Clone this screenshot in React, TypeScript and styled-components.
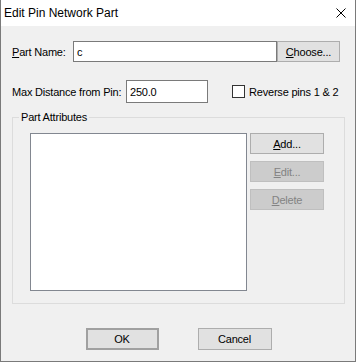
import styled, { createGlobalStyle } from 'styled-components';

const GlobalStyle = createGlobalStyle`
  html, body {
    margin: 0;
    padding: 0;
    background: #ffffff;
  }
  * {
    box-sizing: border-box;
  }
`;

function Mn({ children }: { children: string }) {
  return <Under>{children}</Under>;
}

function App() {
  return (
    <>
      <GlobalStyle />
      <Window>
        <TitleBar>
          <Title>Edit Pin Network Part</Title>
          <CloseBox>
            <svg width="10" height="10" viewBox="0 0 10 10">
              <path d="M0.5 0.5 L9.5 9.5 M9.5 0.5 L0.5 9.5" stroke="#000" strokeWidth="1" />
            </svg>
          </CloseBox>
        </TitleBar>
        <Body>
          <NameRow>
            <Label $width={61}>
              <Mn>P</Mn>art Name:
            </Label>
            <TextBox $width={204} $height={21} defaultValue="c" />
            <Button $width={63}>
              <Mn>C</Mn>hoose...
            </Button>
          </NameRow>
          <DistanceRow>
            <Label $width={114}>Max Distance from Pin:</Label>
            <TextBox $width={82} $height={23} defaultValue="250.0" />
            <CheckLabel>
              <CheckBox />
              Reverse pins 1 &amp; 2
            </CheckLabel>
          </DistanceRow>
          <Group>
            <Legend>Part Attributes</Legend>
            <GroupInner>
              <ListBox />
              <SideButtons>
                <Button $width={74}>
                  <Mn>A</Mn>dd...
                </Button>
                <Button $width={74} $disabled>
                  <Mn>E</Mn>dit...
                </Button>
                <Button $width={74} $disabled>
                  <Mn>D</Mn>elete
                </Button>
              </SideButtons>
            </GroupInner>
          </Group>
          <Footer>
            <Button $width={73} $height={22} $default>
              OK
            </Button>
            <Button $width={74} $height={22}>
              Cancel
            </Button>
          </Footer>
        </Body>
      </Window>
    </>
  );
}

const Window = styled.div`
  width: 356px;
  height: 362px;
  display: flex;
  flex-direction: column;
  border: 1px solid #7a7a7a;
  border-top: none;
  background: #f0f0f0;
  font-family: 'Liberation Sans', Arial, sans-serif;
  font-size: 11px;
  letter-spacing: -0.2px;
  color: #000;
`;

const TitleBar = styled.div`
  height: 26px;
  flex: none;
  display: flex;
  align-items: center;
  justify-content: space-between;
  background: #ffffff;
  padding: 0 9px 0 3px;
`;

const Title = styled.span`
  font-family: 'Liberation Sans', Arial, sans-serif;
  font-size: 12px;
  letter-spacing: 0;
  margin-top: -1px;
`;

const CloseBox = styled.span`
  display: flex;
  width: 10px;
  height: 10px;
  margin-bottom: 1px;
`;

const Body = styled.div`
  flex: 1;
  display: flex;
  flex-direction: column;
  padding: 15px 10px 0 11px;
`;

const Row = styled.div`
  display: flex;
  align-items: center;
`;

const NameRow = styled(Row)`
  height: 21px;
`;

const DistanceRow = styled(Row)`
  height: 23px;
  margin-top: 18px;
`;

const Label = styled.span<{ $width: number }>`
  width: ${({ $width }) => $width}px;
  flex: none;
  white-space: nowrap;
`;

const Under = styled.span`
  text-decoration: underline;
  text-underline-offset: 1px;
`;

const TextBox = styled.input<{ $width: number; $height: number }>`
  width: ${({ $width }) => $width}px;
  height: ${({ $height }) => $height}px;
  flex: none;
  border: 1px solid #7a7a7a;
  background: #ffffff;
  padding: 0 0 0 3px;
  margin: 0;
  font: inherit;
  letter-spacing: inherit;
  color: #000;
  outline: none;
`;

const Button = styled.div<{ $width: number; $height?: number; $disabled?: boolean; $default?: boolean }>`
  width: ${({ $width }) => $width}px;
  height: ${({ $height }) => $height ?? 21}px;
  flex: none;
  display: flex;
  align-items: center;
  justify-content: center;
  background: ${({ $disabled }) => ($disabled ? '#cccccc' : '#e1e1e1')};
  border: ${({ $default }) => ($default ? '2px solid' : '1px solid')};
  border-color: ${({ $disabled, $default }) => ($disabled ? '#bfbfbf' : $default ? '#a0a0a0' : '#adadad')};
  color: ${({ $disabled }) => ($disabled ? '#838383' : '#000')};
`;

const CheckLabel = styled.label`
  display: flex;
  align-items: center;
  gap: 4px;
  margin-left: 24px;
  white-space: nowrap;
`;

const CheckBox = styled.span`
  width: 13px;
  height: 13px;
  border: 1px solid #333333;
  background: #ffffff;
  flex: none;
`;

const Group = styled.fieldset`
  margin: 8px 0 0 0;
  padding: 0 0 12px 17px;
  width: 333px;
  border: 1px solid #dcdcdc;
  min-width: 0;
`;

const Legend = styled.legend`
  padding: 0 2px;
  margin-left: -11px;
  line-height: 13px;
`;

const GroupInner = styled.div`
  display: flex;
  gap: 3px;
  margin-top: 9px;
`;

const ListBox = styled.div`
  width: 217px;
  height: 158px;
  border: 1px solid #828790;
  background: #ffffff;
`;

const SideButtons = styled.div`
  display: flex;
  flex-direction: column;
  gap: 7px;
`;

const Footer = styled.div`
  display: flex;
  justify-content: center;
  gap: 39px;
  margin-top: 24px;
`;

export default App;
